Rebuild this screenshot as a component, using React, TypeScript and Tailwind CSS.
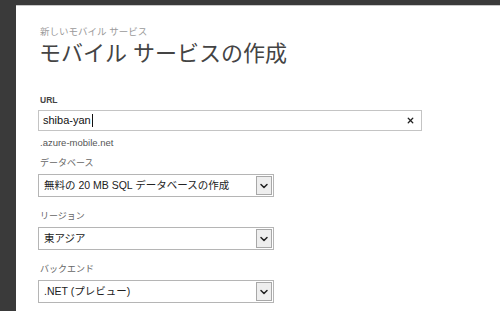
import { ChevronDown, X } from "lucide-react";

const font = {
  fontFamily: '"Liberation Sans", "Noto Sans CJK JP", sans-serif',
};

function Label({ text }: { text: string }) {
  return (
    <div className="h-[13px] pl-[2px] text-[9px] leading-[13px] text-[#666]">{text}</div>
  );
}

function SelectBox({ value }: { value: string }) {
  return (
    <div className="mt-[4px] flex h-[23px] w-[236px] items-center border border-[#b5b5b5] bg-white pl-[5px] pr-[1px]">
      <span className="flex-1 text-[10.5px] text-[#222]">{value}</span>
      <div className="flex h-[19px] w-[16px] items-center justify-center border border-[#a8a8a8] bg-[#eeeeee]">
        <ChevronDown className="h-[12px] w-[12px] text-[#222]" strokeWidth={3} />
      </div>
    </div>
  );
}

export default function App() {
  return (
    <div
      className="h-[311px] w-[500px] overflow-hidden bg-[#3a3a3a] pl-[16px] pt-[5px]"
      style={font}
    >
      <div className="h-full border-t border-[#c8c8c8] bg-white pl-[22px] pt-[19px]">
        <div className="pl-[2px] text-[9.5px] leading-[13px] text-[#9a9a9a]">
          新しいモバイル サービス
        </div>
        <h1 className="mt-[2px] pl-[1px] text-[22px] leading-[28px] text-[#444]">
          モバイル サービスの作成
        </h1>

        <div className="mt-[26px] pl-[2px] text-[8.5px] font-bold leading-[13px] text-[#444]">
          URL
        </div>
        <div className="mt-[3px] flex h-[21px] w-[384px] items-center border border-[#c4c4c4] pl-[4px] pr-[6px]">
          <span className="text-[11px] text-[#111]">shiba-yan</span>
          <span className="ml-[1px] h-[13px] w-[1px] bg-[#111]" />
          <span className="flex-1" />
          <X className="h-[9px] w-[9px] text-[#222]" strokeWidth={3.5} />
        </div>

        <div className="mt-[5px] pl-[2px] text-[9.5px] leading-[13px] text-[#555]">
          .azure-mobile.net
        </div>

        <div className="mt-[8px]">
          <Label text="データベース" />
          <SelectBox value="無料の 20 MB SQL データベースの作成" />
        </div>

        <div className="mt-[13px]">
          <Label text="リージョン" />
          <SelectBox value="東アジア" />
        </div>

        <div className="mt-[13px]">
          <Label text="バックエンド" />
          <SelectBox value=".NET (プレビュー)" />
        </div>
      </div>
    </div>
  );
}
